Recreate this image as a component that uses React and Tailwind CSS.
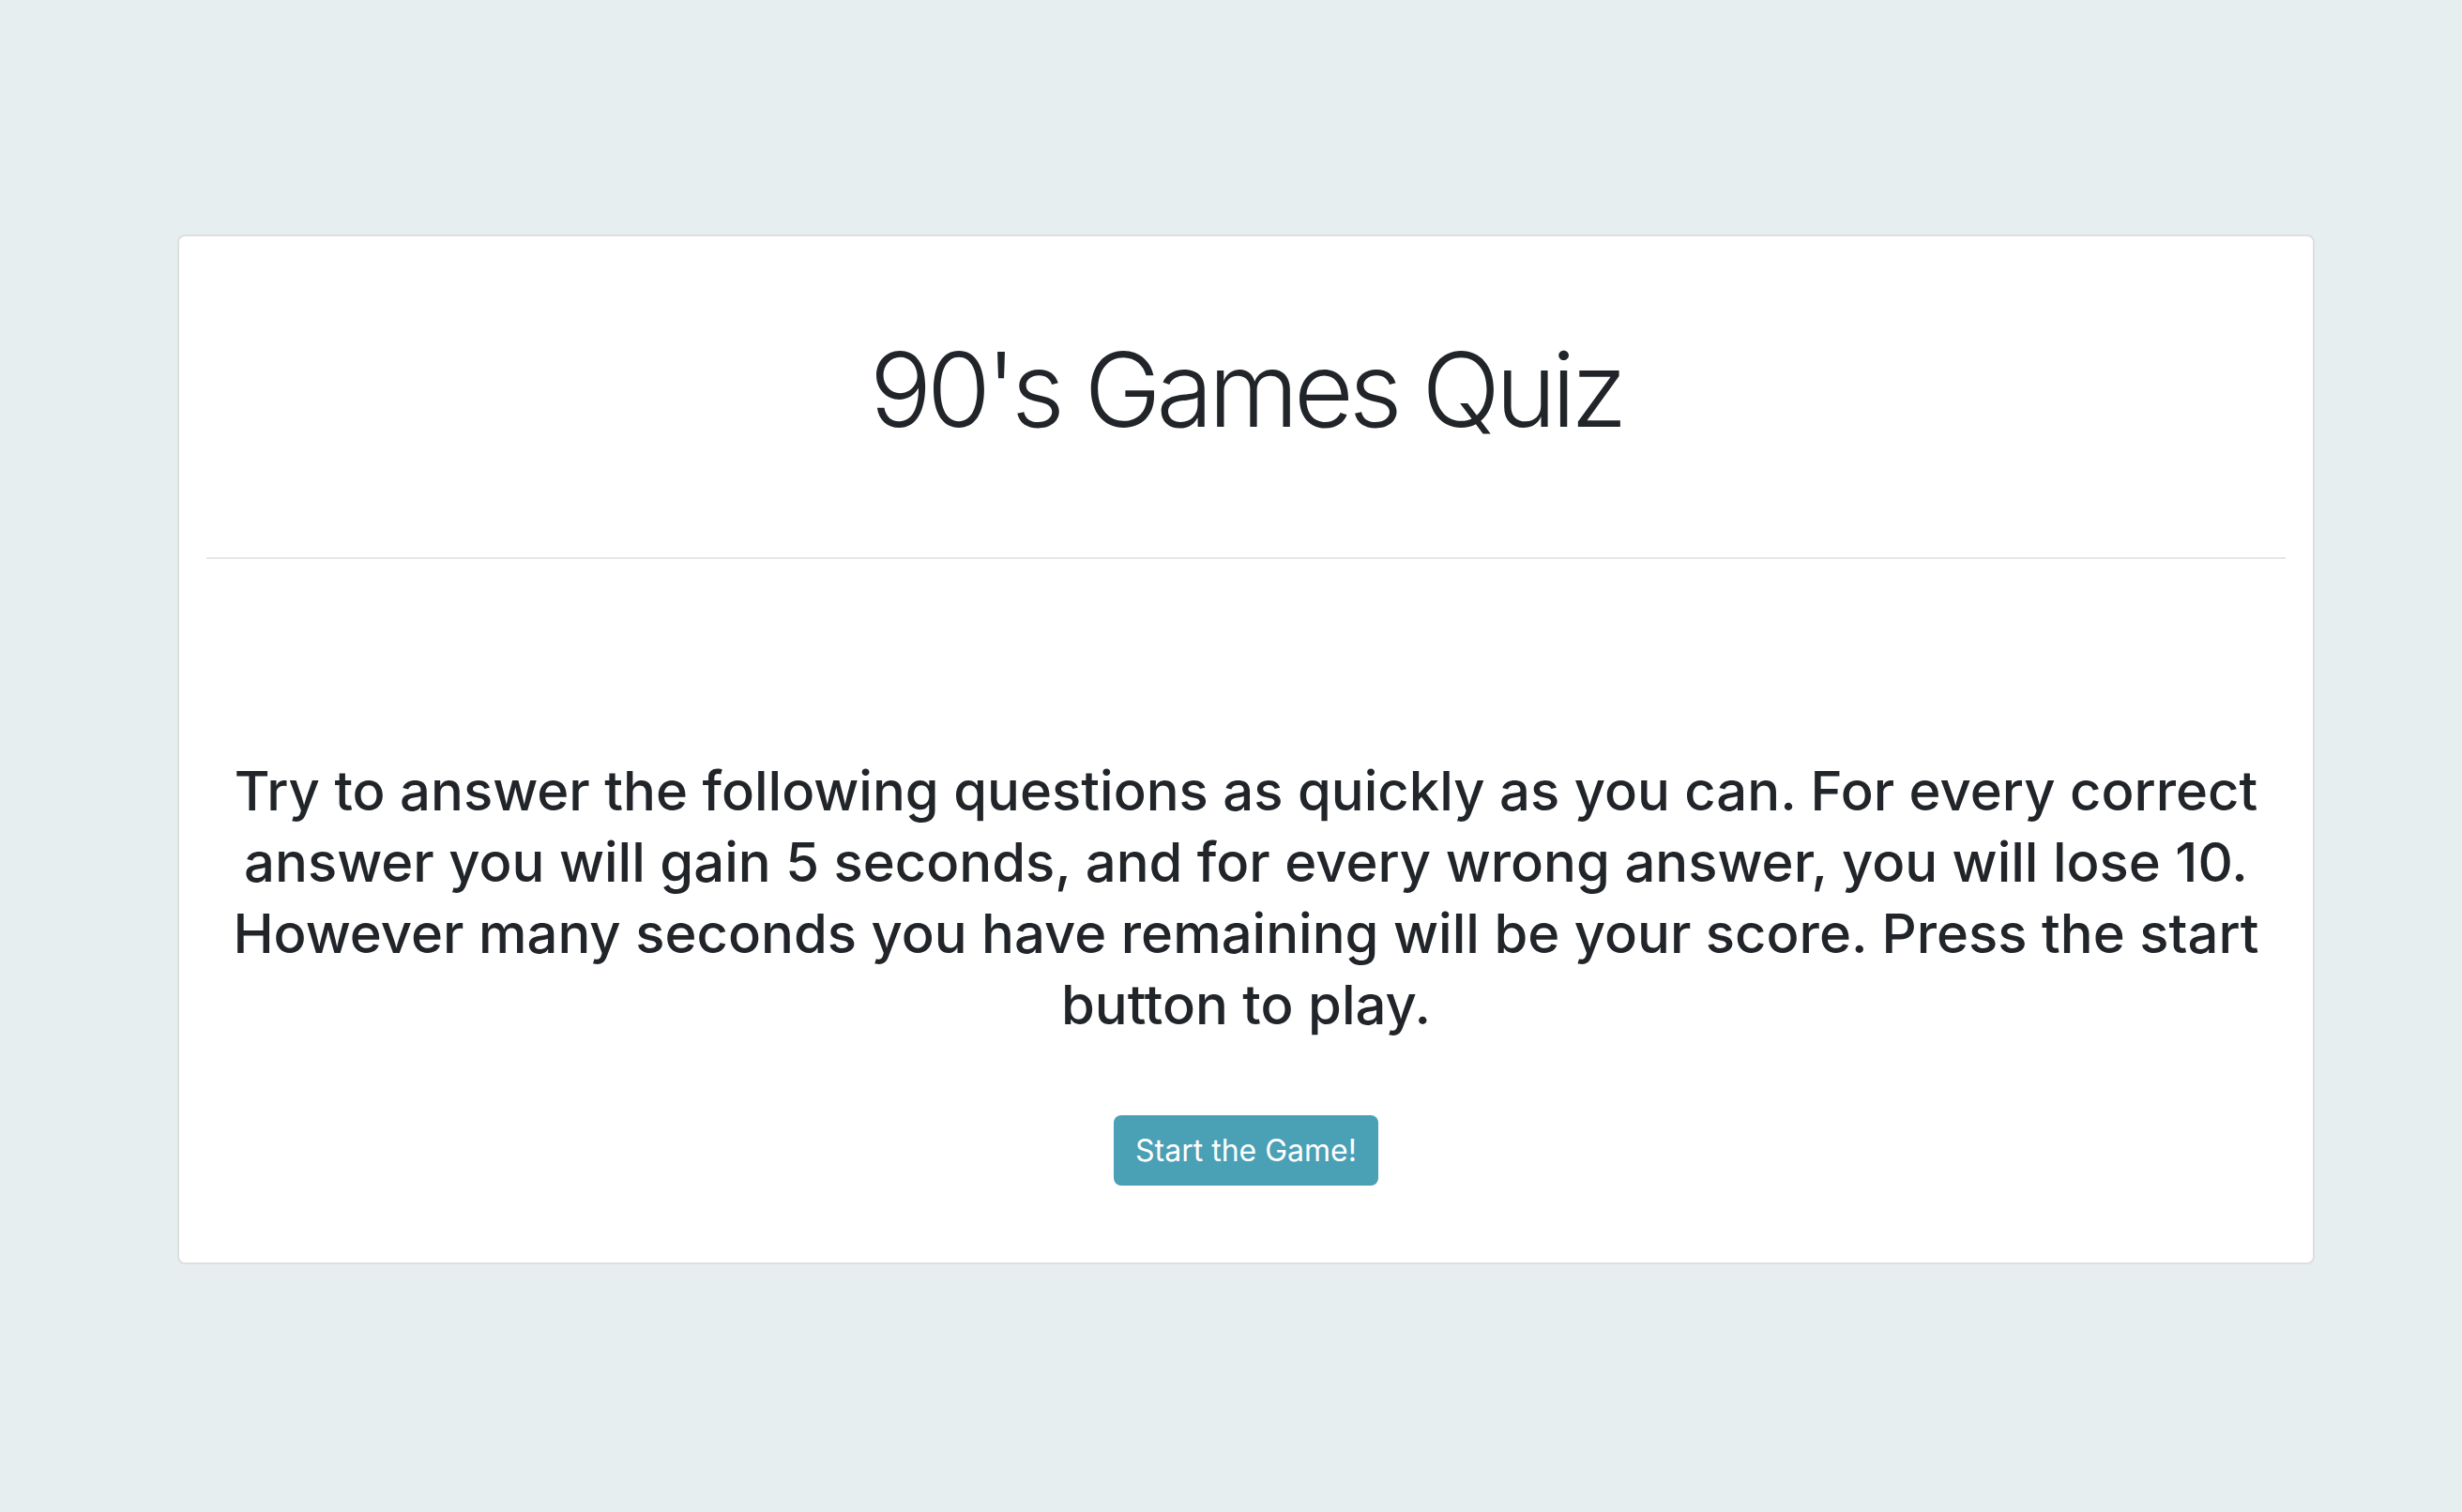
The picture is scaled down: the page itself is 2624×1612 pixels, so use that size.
import React from 'react';

// Start screen of the quiz
export default function App() {
  return (
    <div
      className="min-h-screen bg-[#e6eef0] pt-[250px] pl-[189px] text-[#212529]"
      style={{ fontFamily: 'Inter, "Noto Sans", sans-serif' }}
    >
      <div className="w-[2278px] bg-white border-2 border-[#dedede] rounded-[8px] px-[29px] pt-[97px] pb-[82px]">
        <h1 className="text-[110px] leading-[1.2] font-light text-center tracking-[-5px]">
          90's Games Quiz
        </h1>

        <hr className="mt-[113px] border-t-2 border-[#e6e6e6]" />

        <p className="mt-[209px] text-[58px] leading-[76px] font-medium text-center tracking-[0px]">
          Try to answer the following questions as quickly as you can. For every correct answer you will gain 5
          seconds, and for every wrong answer, you will lose 10. However many seconds you have remaining will be
          your score. Press the start button to play.
        </p>

        <div className="mt-[80px] flex justify-center">
          <button className="h-[75px] px-[23px] rounded-[8px] bg-[#4aa0b5] text-white text-[32px]">
            Start the Game!
          </button>
        </div>
      </div>
    </div>
  );
}
